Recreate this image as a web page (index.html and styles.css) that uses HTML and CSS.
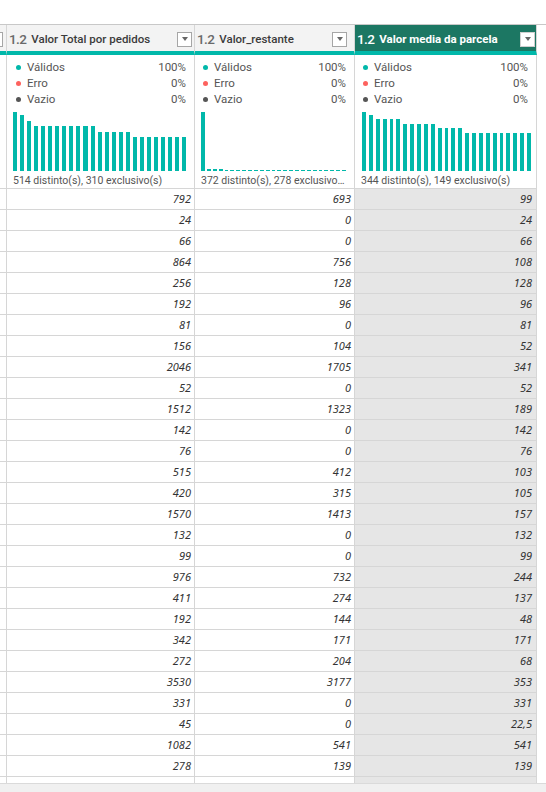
FILE: index.html
```html
<!DOCTYPE html>
<html lang="pt">
<head>
<meta charset="utf-8">
<title>Power Query</title>
<link rel="stylesheet" href="styles.css">
</head>
<body>
<div class="page">
  <div class="topspace"></div>
  <div class="table">
    <div class="row head">
      <div class="hcell c0"><span class="dd partial"></span></div>
      <div class="hcell c1"><span class="type">1.2</span><span class="title">Valor Total por pedidos</span><span class="dd"><i></i></span></div>
      <div class="hcell c2"><span class="type">1.2</span><span class="title">Valor_restante</span><span class="dd wide"><i></i></span></div>
      <div class="hcell c3 sel"><span class="type">1.2</span><span class="title">Valor media da parcela</span><span class="dd tight"><i></i></span></div>
      <div class="hcell c4"></div>
    </div>
    <div class="row stats">
      <div class="scell c0"></div>
      <div class="scell c1">
        <div class="q"><span class="dot ok"></span><span class="lbl">Válidos</span><span class="pct">100%</span></div>
        <div class="q"><span class="dot err"></span><span class="lbl">Erro</span><span class="pct">0%</span></div>
        <div class="q"><span class="dot empty"></span><span class="lbl">Vazio</span><span class="pct">0%</span></div>
        <div class="chart g3">
          <span style="height:59px"></span><span style="height:56px"></span><span style="height:50px"></span>
          <span style="height:45px"></span><span style="height:45px"></span><span style="height:45px"></span><span style="height:45px"></span><span style="height:45px"></span><span style="height:45px"></span><span style="height:45px"></span><span style="height:45px"></span><span style="height:45px"></span>
          <span style="height:39px"></span><span style="height:39px"></span><span style="height:39px"></span><span style="height:39px"></span><span style="height:39px"></span>
          <span style="height:34px"></span><span style="height:34px"></span><span style="height:34px"></span><span style="height:34px"></span><span style="height:34px"></span><span style="height:34px"></span><span style="height:34px"></span><span style="height:34px"></span>
        </div>
        <div class="foot">514 distinto(s), 310 exclusivo(s)</div>
      </div>
      <div class="scell c2">
        <div class="q"><span class="dot ok"></span><span class="lbl">Válidos</span><span class="pct">100%</span></div>
        <div class="q"><span class="dot err"></span><span class="lbl">Erro</span><span class="pct">0%</span></div>
        <div class="q"><span class="dot empty"></span><span class="lbl">Vazio</span><span class="pct">0%</span></div>
        <div class="chart g2">
          <span style="height:59px"></span><span style="height:2px"></span><span style="height:2px"></span><span style="height:2px"></span>
          <span style="height:1px"></span><span style="height:1px"></span><span style="height:1px"></span><span style="height:1px"></span><span style="height:1px"></span><span style="height:1px"></span><span style="height:1px"></span><span style="height:1px"></span><span style="height:1px"></span><span style="height:1px"></span><span style="height:1px"></span><span style="height:1px"></span><span style="height:1px"></span><span style="height:1px"></span><span style="height:1px"></span><span style="height:1px"></span><span style="height:1px"></span><span style="height:1px"></span><span style="height:1px"></span><span style="height:1px"></span><span style="height:1px"></span>
        </div>
        <div class="foot">372 distinto(s), 278 exclusivo(s)</div>
      </div>
      <div class="scell c3">
        <div class="q"><span class="dot ok"></span><span class="lbl">Válidos</span><span class="pct">100%</span></div>
        <div class="q"><span class="dot err"></span><span class="lbl">Erro</span><span class="pct">0%</span></div>
        <div class="q"><span class="dot empty"></span><span class="lbl">Vazio</span><span class="pct">0%</span></div>
        <div class="chart g3">
          <span style="height:59px"></span><span style="height:56px"></span>
          <span style="height:52px"></span><span style="height:52px"></span><span style="height:52px"></span><span style="height:52px"></span>
          <span style="height:47px"></span><span style="height:47px"></span><span style="height:47px"></span><span style="height:47px"></span><span style="height:47px"></span>
          <span style="height:43px"></span><span style="height:43px"></span><span style="height:43px"></span><span style="height:43px"></span>
          <span style="height:38px"></span><span style="height:38px"></span><span style="height:38px"></span><span style="height:38px"></span><span style="height:38px"></span><span style="height:38px"></span><span style="height:38px"></span><span style="height:38px"></span><span style="height:38px"></span><span style="height:38px"></span>
        </div>
        <div class="foot">344 distinto(s), 149 exclusivo(s)</div>
      </div>
      <div class="scell c4"></div>
    </div>

    <div class="row data"><div class="c0"></div><div class="c1">792</div><div class="c2">693</div><div class="c3">99</div><div class="c4"></div></div>
    <div class="row data"><div class="c0"></div><div class="c1">24</div><div class="c2">0</div><div class="c3">24</div><div class="c4"></div></div>
    <div class="row data"><div class="c0"></div><div class="c1">66</div><div class="c2">0</div><div class="c3">66</div><div class="c4"></div></div>
    <div class="row data"><div class="c0"></div><div class="c1">864</div><div class="c2">756</div><div class="c3">108</div><div class="c4"></div></div>
    <div class="row data"><div class="c0"></div><div class="c1">256</div><div class="c2">128</div><div class="c3">128</div><div class="c4"></div></div>
    <div class="row data"><div class="c0"></div><div class="c1">192</div><div class="c2">96</div><div class="c3">96</div><div class="c4"></div></div>
    <div class="row data"><div class="c0"></div><div class="c1">81</div><div class="c2">0</div><div class="c3">81</div><div class="c4"></div></div>
    <div class="row data"><div class="c0"></div><div class="c1">156</div><div class="c2">104</div><div class="c3">52</div><div class="c4"></div></div>
    <div class="row data"><div class="c0"></div><div class="c1">2046</div><div class="c2">1705</div><div class="c3">341</div><div class="c4"></div></div>
    <div class="row data"><div class="c0"></div><div class="c1">52</div><div class="c2">0</div><div class="c3">52</div><div class="c4"></div></div>
    <div class="row data"><div class="c0"></div><div class="c1">1512</div><div class="c2">1323</div><div class="c3">189</div><div class="c4"></div></div>
    <div class="row data"><div class="c0"></div><div class="c1">142</div><div class="c2">0</div><div class="c3">142</div><div class="c4"></div></div>
    <div class="row data"><div class="c0"></div><div class="c1">76</div><div class="c2">0</div><div class="c3">76</div><div class="c4"></div></div>
    <div class="row data"><div class="c0"></div><div class="c1">515</div><div class="c2">412</div><div class="c3">103</div><div class="c4"></div></div>
    <div class="row data"><div class="c0"></div><div class="c1">420</div><div class="c2">315</div><div class="c3">105</div><div class="c4"></div></div>
    <div class="row data"><div class="c0"></div><div class="c1">1570</div><div class="c2">1413</div><div class="c3">157</div><div class="c4"></div></div>
    <div class="row data"><div class="c0"></div><div class="c1">132</div><div class="c2">0</div><div class="c3">132</div><div class="c4"></div></div>
    <div class="row data"><div class="c0"></div><div class="c1">99</div><div class="c2">0</div><div class="c3">99</div><div class="c4"></div></div>
    <div class="row data"><div class="c0"></div><div class="c1">976</div><div class="c2">732</div><div class="c3">244</div><div class="c4"></div></div>
    <div class="row data"><div class="c0"></div><div class="c1">411</div><div class="c2">274</div><div class="c3">137</div><div class="c4"></div></div>
    <div class="row data"><div class="c0"></div><div class="c1">192</div><div class="c2">144</div><div class="c3">48</div><div class="c4"></div></div>
    <div class="row data"><div class="c0"></div><div class="c1">342</div><div class="c2">171</div><div class="c3">171</div><div class="c4"></div></div>
    <div class="row data"><div class="c0"></div><div class="c1">272</div><div class="c2">204</div><div class="c3">68</div><div class="c4"></div></div>
    <div class="row data"><div class="c0"></div><div class="c1">3530</div><div class="c2">3177</div><div class="c3">353</div><div class="c4"></div></div>
    <div class="row data"><div class="c0"></div><div class="c1">331</div><div class="c2">0</div><div class="c3">331</div><div class="c4"></div></div>
    <div class="row data"><div class="c0"></div><div class="c1">45</div><div class="c2">0</div><div class="c3">22,5</div><div class="c4"></div></div>
    <div class="row data"><div class="c0"></div><div class="c1">1082</div><div class="c2">541</div><div class="c3">541</div><div class="c4"></div></div>
    <div class="row data"><div class="c0"></div><div class="c1">278</div><div class="c2">139</div><div class="c3">139</div><div class="c4"></div></div>
    <div class="row data"><div class="c0"></div><div class="c1"></div><div class="c2"></div><div class="c3"></div><div class="c4"></div></div>
  </div>
  <div class="hscroll"></div>
</div>
</body>
</html>
```

FILE: styles.css
```css
* { box-sizing: border-box; }
html, body { margin: 0; padding: 0; background: #ffffff; }
body { font-family: Roboto, "Liberation Sans", sans-serif; color: #333333; }

.page { width: 546px; height: 792px; display: flex; flex-direction: column; overflow: hidden; }
.topspace { height: 24px; flex: none; background: #ffffff; }
.table { flex: 1; overflow: hidden; border-top: 1px solid #c8c8c8; }
.hscroll { flex: none; height: 9px; background: #f0f0f0; border-top: 1px solid #dadada; }

.row { display: grid; grid-template-columns: 7px 188px 160px 182px 1fr; }
.row > .c0, .row > .c1, .row > .c2, .row > .c3 { border-right: 1px solid #d6d6d6; }
.row > .c4 { border-right: none; }

/* header */
.head { height: 30px; }
.hcell { background: #f3f3f3; border-bottom: 4px solid #01b8aa; display: flex; align-items: center; padding: 2px 0 0 2px; overflow: hidden; }
.hcell.c0 { padding-left: 0; }
.hcell.c4 { background: #ffffff; border-bottom: none; }
.hcell.sel { background: #1c7763; }
.type { font-family: Roboto, sans-serif; font-weight: 500; font-size: 13.5px; letter-spacing: -0.6px; color: #6a6a6a; margin-right: 5px; }
.title { flex: 1; font-weight: 500; font-size: 11.5px; color: #3b3b3b; white-space: nowrap; overflow: hidden; }
.sel .type, .sel .title { color: #ffffff; }
.sel .title { font-weight: 700; }
.dd { flex: none; width: 15px; height: 15px; border: 1px solid #a6a6a6; background: #ffffff; margin-right: 2px; display: flex; align-items: center; justify-content: center; }
.dd.wide { margin-right: 7px; }
.dd.tight { margin-right: 1px; border-color: #cfcfcf; }
.dd.partial { margin-left: -12px; }
.dd i { display: block; width: 0; height: 0; border-left: 3.5px solid transparent; border-right: 3.5px solid transparent; border-top: 4px solid #666666; }

/* stats */
.stats { height: 134px; }
.scell { border-bottom: 1px solid #d6d6d6; padding: 4px 8px 0 0; overflow: hidden; background: #ffffff; }
.scell.c0, .scell.c4 { padding: 0; }
.scell.c4 { border-bottom: none; }
.q { display: flex; align-items: center; height: 16px; font-size: 11.5px; color: #555555; padding-left: 9px; }
.c2 .q, .c3 .q { padding-left: 8px; }
.dot { width: 5px; height: 5px; border-radius: 50%; margin-right: 6px; flex: none; }
.dot.ok { background: #01b8aa; }
.dot.err { background: #fd625e; }
.dot.empty { background: #555555; }
.lbl { flex: 1; }
.pct { text-align: right; }
.chart { display: flex; align-items: flex-end; height: 60px; margin-top: 4px; padding-left: 6px; }
.c3 .chart { padding-left: 7px; padding-right: 0; margin-right: -3px; }
.chart.g3 { gap: 3px; }
.chart.g2 { gap: 2px; }
.chart span { flex: 1; background: #01b8aa; display: block; }
.foot { margin-top: 2px; height: 15px; line-height: 15px; font-size: 10.5px; color: #555555; padding-left: 6px; white-space: nowrap; overflow: hidden; text-overflow: ellipsis; }

/* data rows */
.data { height: 21px; }
.data > div { border-bottom: 1px solid #d6d6d6; font-family: "Noto Sans", "Open Sans", sans-serif; font-style: italic; font-size: 11px; line-height: 20px; text-align: right; padding-right: 3px; color: #333333; white-space: nowrap; overflow: hidden; }
.data > .c3 { background: #e6e6e6; padding-right: 4px; }
.data > .c4 { border-bottom: none; }
```
